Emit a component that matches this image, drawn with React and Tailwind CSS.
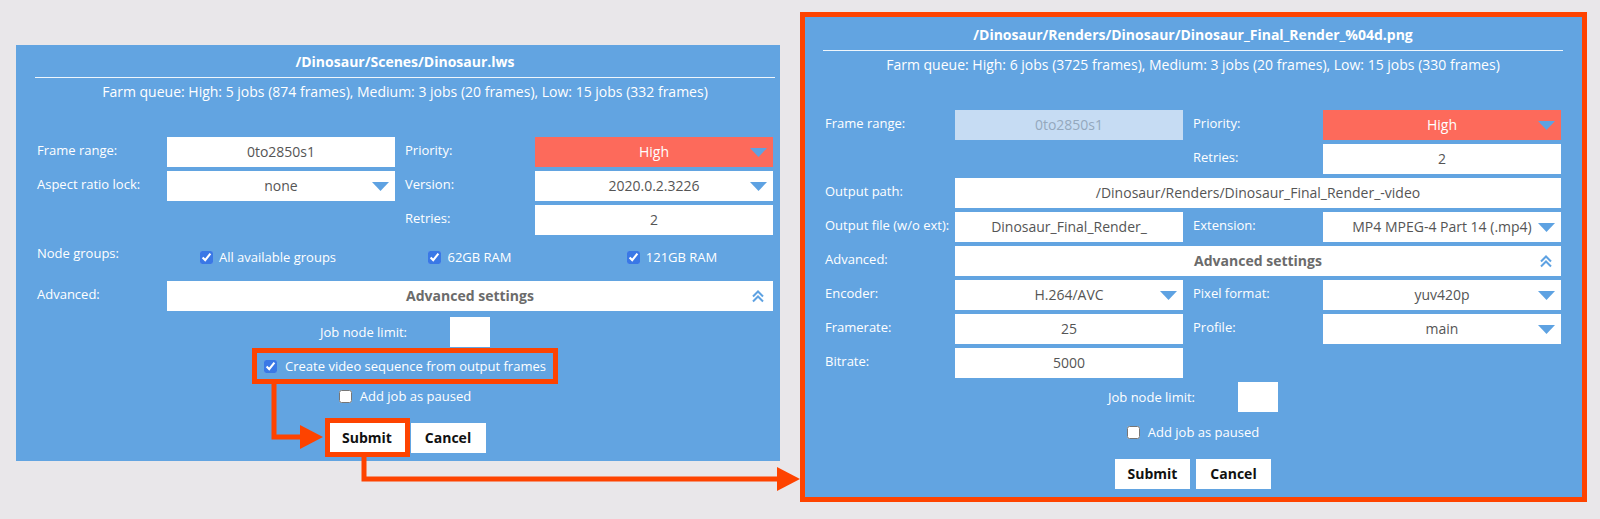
import React from 'react';

const ORANGE = '#fe4300';

const Triangle = () => (
  <svg width="17" height="9" viewBox="0 0 17 9">
    <path d="M0 0h17L8.5 9z" fill="#5ea2e2" />
  </svg>
);

const Chevrons = () => (
  <svg width="14" height="14" viewBox="0 0 14 14" fill="none" stroke="#5ea2e2" strokeWidth="2">
    <path d="M2 7.5l5-5 5 5M2 12.5l5-5 5 5" />
  </svg>
);

const Label = ({ children }) => (
  <div className="pt-[3px] leading-[20px] text-white whitespace-nowrap">{children}</div>
);

const Label2 = ({ children }) => (
  <div className="pl-[10px] pt-[3px] leading-[20px] text-white whitespace-nowrap">{children}</div>
);

const Box = ({ children, select, red, disabled, span }) => {
  let bg = 'bg-white text-[#555]';
  if (red) bg = 'bg-[#fd6a5b] text-white';
  if (disabled) bg = 'bg-[#c6dcf3] text-[#94a8bd]';
  return (
    <div className={`relative h-[30px] flex items-center justify-center text-[14px] ${bg} ${span ? 'col-span-3' : ''}`}>
      <span className="leading-[20px] whitespace-nowrap">{children}</span>
      {select && (
        <span className="absolute right-[6px] top-[11px] flex">
          <Triangle />
        </span>
      )}
    </div>
  );
};

const AdvancedBox = () => (
  <div className="relative col-span-3 h-[30px] flex items-center justify-center bg-white">
    <span className="font-bold text-[14px] text-[#6b6b6b] leading-[20px]">Advanced settings</span>
    <span className="absolute right-[8px] top-[8px] flex">
      <Chevrons />
    </span>
  </div>
);

const Check = ({ checked, children, gap = 'ml-[6px]' }) => (
  <label className="flex items-center text-white leading-[20px] whitespace-nowrap">
    <input
      type="checkbox"
      checked={checked}
      readOnly
      className="m-0 w-[13px] h-[13px] accent-[#3a78e6]"
    />
    <span className={gap}>{children}</span>
  </label>
);

const JobNodeLimit = () => (
  <div className="flex justify-center items-center gap-[43px]">
    <span className="text-white leading-[20px]">Job node limit:</span>
    <div className="w-[40px] h-[30px] bg-white" />
  </div>
);

const Button = ({ children }) => (
  <button type="button" className="w-[75px] h-[30px] bg-white text-[#111] text-[14px] font-bold leading-[20px]">
    {children}
  </button>
);

const gridCls = 'grid grid-cols-[130px_228px_140px_238px] gap-y-[4px] px-[2px]';

function LeftPanel() {
  return (
    <div className="w-[764px] h-[416px] bg-[#62a4e1] pl-[19px] pr-[5px] pt-[7px] flex flex-col">
      <div className="text-center text-white font-bold text-[14px] leading-[20px]">/Dinosaur/Scenes/Dinosaur.lws</div>
      <div className="mt-[5px] h-px bg-white/90" />
      <div className="mt-[4px] text-center text-white text-[14px] leading-[20px]">
        Farm queue: High: 5 jobs (874 frames), Medium: 3 jobs (20 frames), Low: 15 jobs (332 frames)
      </div>
      <div className={`${gridCls} mt-[35px]`}>
        <Label>Frame range:</Label>
        <Box>0to2850s1</Box>
        <Label2>Priority:</Label2>
        <Box select red>High</Box>

        <Label>Aspect ratio lock:</Label>
        <Box select>none</Box>
        <Label2>Version:</Label2>
        <Box select>2020.0.2.3226</Box>

        <div />
        <div />
        <Label2>Retries:</Label2>
        <Box>2</Box>

        <div className="h-[38px] pt-[1px]">
          <Label>Node groups:</Label>
        </div>
        <div className="col-span-3 grid grid-cols-3 pt-[8px] items-start">
          <div className="flex justify-center"><Check checked>All available groups</Check></div>
          <div className="flex justify-center"><Check checked>62GB RAM</Check></div>
          <div className="flex justify-center"><Check checked>121GB RAM</Check></div>
        </div>

        <Label>Advanced:</Label>
        <AdvancedBox />
      </div>
      <div className="mt-[6px]">
        <JobNodeLimit />
      </div>
      <div className="mt-[1px] flex justify-center">
        <div className="h-[36px] flex items-center px-[7px] border-[5px] border-[#fe4300]">
          <Check checked gap="ml-[8px]">Create video sequence from output frames</Check>
        </div>
      </div>
      <div className="h-[24px] flex justify-center items-center">
        <Check gap="ml-[8px]">Add job as paused</Check>
      </div>
      <div className="mt-[10px] flex justify-center items-center gap-[1px]">
        <div className="border-[5px] border-[#fe4300] flex">
          <button type="button" className="w-[75px] h-[29px] bg-white text-[#111] text-[14px] font-bold leading-[20px]">Submit</button>
        </div>
        <Button>Cancel</Button>
      </div>
    </div>
  );
}

function RightPanel() {
  return (
    <div className="w-[787px] h-[490px] border-[5px] border-[#fe4300] bg-[#62a4e1] pl-[18px] pr-[19px] pt-[8px] flex flex-col">
      <div className="text-center text-white font-bold text-[14px] leading-[20px]">
        /Dinosaur/Renders/Dinosaur/Dinosaur_Final_Render_%04d.png
      </div>
      <div className="mt-[5px] h-px bg-white/90" />
      <div className="mt-[4px] text-center text-white text-[14px] leading-[20px]">
        Farm queue: High: 6 jobs (3725 frames), Medium: 3 jobs (20 frames), Low: 15 jobs (330 frames)
      </div>
      <div className={`${gridCls} mt-[35px]`}>
        <Label>Frame range:</Label>
        <Box disabled>0to2850s1</Box>
        <Label2>Priority:</Label2>
        <Box select red>High</Box>

        <div />
        <div />
        <Label2>Retries:</Label2>
        <Box>2</Box>

        <Label>Output path:</Label>
        <Box span>/Dinosaur/Renders/Dinosaur_Final_Render_-video</Box>

        <Label>Output file (w/o ext):</Label>
        <Box>Dinosaur_Final_Render_</Box>
        <Label2>Extension:</Label2>
        <Box select>MP4 MPEG-4 Part 14 (.mp4)</Box>

        <Label>Advanced:</Label>
        <AdvancedBox />

        <Label>Encoder:</Label>
        <Box select>H.264/AVC</Box>
        <Label2>Pixel format:</Label2>
        <Box select>yuv420p</Box>

        <Label>Framerate:</Label>
        <Box>25</Box>
        <Label2>Profile:</Label2>
        <Box select>main</Box>

        <Label>Bitrate:</Label>
        <Box>5000</Box>
        <div />
        <div />
      </div>
      <div className="mt-[4px]">
        <JobNodeLimit />
      </div>
      <div className="mt-[8px] h-[24px] flex justify-center items-center">
        <Check gap="ml-[8px]">Add job as paused</Check>
      </div>
      <div className="mt-[15px] flex justify-center items-center gap-[6px]">
        <Button>Submit</Button>
        <Button>Cancel</Button>
      </div>
    </div>
  );
}

export default function App() {
  return (
    <div className="relative w-[1600px] h-[519px] overflow-hidden bg-[#e9e7ea] font-['Open_Sans','Noto_Sans',Arial,sans-serif] text-[13px]">
      <div className="flex items-start">
        <div className="ml-[16px] mt-[45px]">
          <LeftPanel />
        </div>
        <div className="ml-[20px] mt-[12px]">
          <RightPanel />
        </div>
      </div>
      {/* annotation arrows */}
      <svg className="absolute inset-0 pointer-events-none" width="1600" height="519">
        <polyline points="274,382 274,437 302,437" fill="none" stroke={ORANGE} strokeWidth="5" />
        <polygon points="300,425 323,437 300,449" fill={ORANGE} />
        <polyline points="364,456 364,479 779,479" fill="none" stroke={ORANGE} strokeWidth="5" />
        <polygon points="777,467 800,479 777,491" fill={ORANGE} />
      </svg>
    </div>
  );
}
